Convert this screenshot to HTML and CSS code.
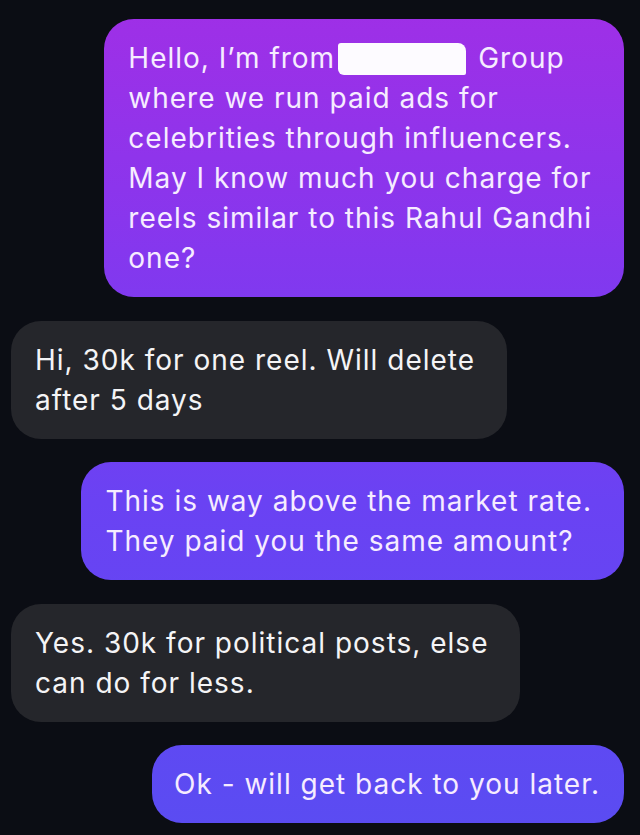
FILE: index.html
```html
<!DOCTYPE html>
<html>
<head>
  <link rel="stylesheet" href="styles.css">
</head>
<body>
  <div class="thread">
    <div class="msg sent">
      Hello, I’m from<span class="redacted"></span>Group<br>
      where we run paid ads for<br>
      celebrities through influencers.<br>
      May I know much you charge for<br>
      reels similar to this Rahul Gandhi<br>
      one?
    </div>
    <div class="msg received">
      Hi, 30k for one reel. Will delete<br>
      after 5 days
    </div>
    <div class="msg sent">
      This is way above the market rate.<br>
      They paid you the same amount?
    </div>
    <div class="msg received">
      Yes. 30k for political posts, else<br>
      can do for less.
    </div>
    <div class="msg sent single">
      Ok - will get back to you later.
    </div>
  </div>
</body>
</html>
```

FILE: styles.css
```css
html, body {
  margin: 0;
  background: #0b0d14;
}

.thread {
  display: flex;
  flex-direction: column;
  gap: 23.5px;
  padding: 19px 16px 12px 11px;
  font-family: Inter, "Noto Sans", sans-serif;
  font-size: 28px;
  letter-spacing: 1px;
  line-height: 40px;
}

.msg {
  width: fit-content;
  padding: 19px 32px 19px 24px;
  border-radius: 30px;
  white-space: nowrap;
}

.msg.single {
  padding: 19px 24px 19px 22px;
}

.sent {
  align-self: flex-end;
  color: #f6ecff;
  background: linear-gradient(180deg, #a02fe6 0%, #8537ee 30%, #6a42f3 60%, #5a4cf2 100%) fixed;
}

.received {
  align-self: flex-start;
  color: #f4f4f6;
  background: #25262b;
}

.redacted {
  display: inline-block;
  width: 128px;
  height: 32px;
  margin: 0 12px 0 3px;
  vertical-align: -7px;
  background: #fdfbff;
  border-radius: 3px 8px 2px 6px;
}
```
